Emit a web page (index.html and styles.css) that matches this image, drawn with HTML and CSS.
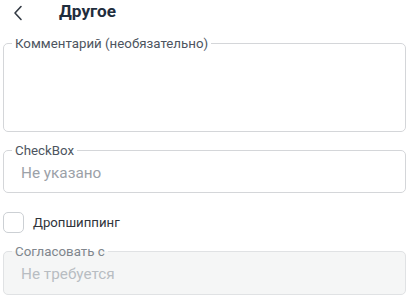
FILE: index.html
```html
<!DOCTYPE html>
<html lang="ru">
<head>
<meta charset="utf-8">
<link rel="stylesheet" href="styles.css">
</head>
<body>
<div class="page">
  <header class="header">
    <button class="back" aria-label="Назад">
      <svg width="10" height="16" viewBox="0 0 10 16"><path d="M8 1.5 L2 8 L8 14.5" fill="none" stroke="#333a44" stroke-width="1.6" stroke-linecap="round" stroke-linejoin="round"/></svg>
    </button>
    <h1 class="title">Другое</h1>
  </header>

  <fieldset class="field field-area">
    <legend class="field-label">Комментарий (необязательно)</legend>
    <div class="field-value"></div>
  </fieldset>

  <fieldset class="field field-input">
    <legend class="field-label">CheckBox</legend>
    <div class="field-value placeholder">Не указано</div>
  </fieldset>

  <label class="check">
    <span class="check-box"></span>
    <span class="check-label">Дропшиппинг</span>
  </label>

  <fieldset class="field field-input field-disabled">
    <legend class="field-label">Согласовать с</legend>
    <div class="field-value placeholder">Не требуется</div>
  </fieldset>
</div>
</body>
</html>
```
FILE: styles.css
```css
* { box-sizing: border-box; }
html, body { margin: 0; padding: 0; background: #fff; }
body { font-family: Roboto, "Noto Sans", sans-serif; color: #2b2f36; }
.page { padding: 0 4px 0 3px; }
.header { display: flex; align-items: center; height: 26px; }
.back { border: 0; background: none; padding: 0; margin: 0 0 0 10px; width: 10px; height: 16px; display: flex; }
.title { margin: 0 0 4px 36px; font-size: 17.2px; font-weight: 700; color: #1f2d3d; line-height: 20px; }
.field { margin: 10px 0 0; padding: 0 12px; border: 1px solid #d4d6d9; border-radius: 5px; min-width: 0; }
.field-label { padding: 0 3px; margin-left: -4px; font-size: 13.3px; line-height: 15px; color: #4d5560; }
.field-area { height: 96px; }
.field-input { height: 50px; margin-top: 11px; }
.field-value { font-size: 15.3px; line-height: 20px; padding: 5px 5px 0; }
.placeholder { color: #9ba1a8; }
.check { display: flex; align-items: center; margin: 19px 0 0; gap: 9px; }
.check-box { width: 21px; height: 21px; border: 1px solid #ccd0d4; border-radius: 5px; }
.check-label { font-size: 13.2px; color: #2f343b; }
.field-disabled { background: #f5f6f6; border-color: #e0e2e4; margin-top: 11px; height: 51px; }
.field-disabled .placeholder { color: #b8bdc2; }
.field-disabled .field-label { color: #80868d; }
```
